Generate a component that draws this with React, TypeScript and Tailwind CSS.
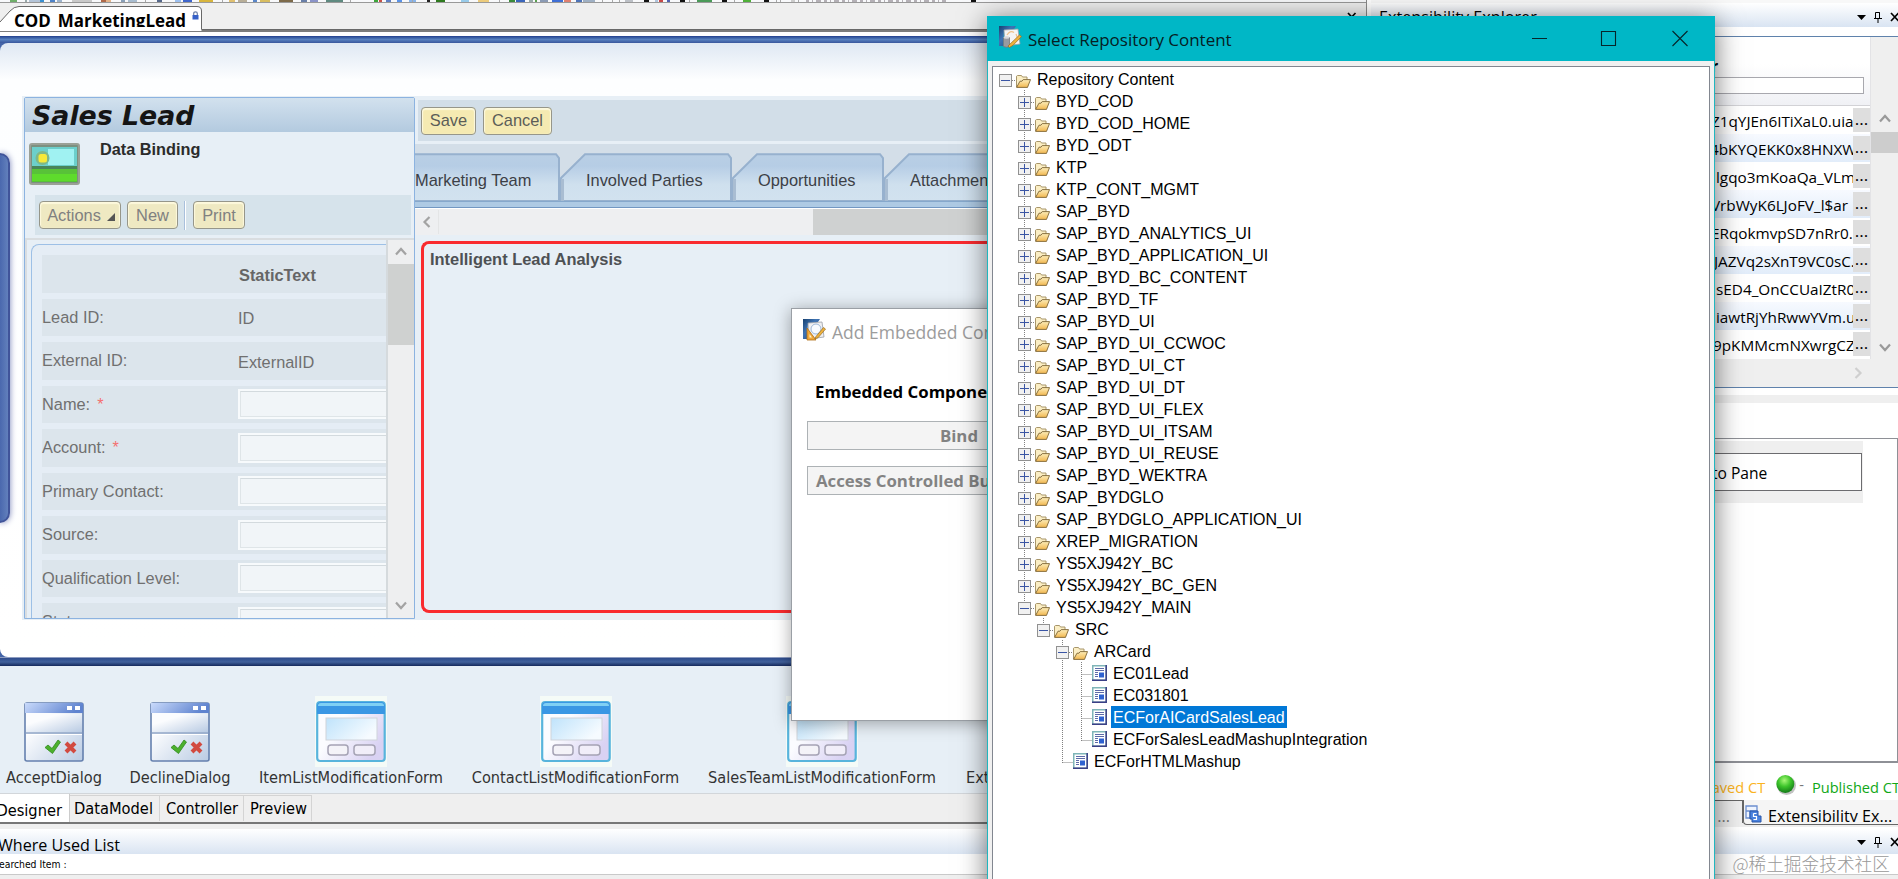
import type { ReactNode } from "react";

type NodeKind = "open" | "closed" | "leaf";
type TreeNode = { label: string; level: number; kind: NodeKind; guides?: number[]; last?: boolean; selected?: boolean };

const closedNames = [
  "BYD_COD", "BYD_COD_HOME", "BYD_ODT", "KTP", "KTP_CONT_MGMT", "SAP_BYD", "SAP_BYD_ANALYTICS_UI",
  "SAP_BYD_APPLICATION_UI", "SAP_BYD_BC_CONTENT", "SAP_BYD_TF", "SAP_BYD_UI", "SAP_BYD_UI_CCWOC",
  "SAP_BYD_UI_CT", "SAP_BYD_UI_DT", "SAP_BYD_UI_FLEX", "SAP_BYD_UI_ITSAM", "SAP_BYD_UI_REUSE",
  "SAP_BYD_WEKTRA", "SAP_BYDGLO", "SAP_BYDGLO_APPLICATION_UI", "XREP_MIGRATION", "YS5XJ942Y_BC", "YS5XJ942Y_BC_GEN",
];

const tree: TreeNode[] = [
  { label: "Repository Content", level: 0, kind: "open", last: true },
  ...closedNames.map((label): TreeNode => ({ label, level: 1, kind: "closed" })),
  { label: "YS5XJ942Y_MAIN", level: 1, kind: "open", last: true },
  { label: "SRC", level: 2, kind: "open", last: true },
  { label: "ARCard", level: 3, kind: "open" },
  { label: "EC01Lead", level: 4, kind: "leaf", guides: [3] },
  { label: "EC031801", level: 4, kind: "leaf", guides: [3] },
  { label: "ECForAICardSalesLead", level: 4, kind: "leaf", guides: [3], selected: true },
  { label: "ECForSalesLeadMashupIntegration", level: 4, kind: "leaf", guides: [3], last: true },
  { label: "ECForHTMLMashup", level: 3, kind: "leaf", last: true },
];

function FolderIcon() {
  return (
    <svg width="15" height="13" viewBox="0 0 15 13" className="mt-px block shrink-0">
      <defs>
        <linearGradient id="folderFront" x1="0" y1="0" x2="0" y2="1">
          <stop offset="0" stopColor="#fdedb8" />
          <stop offset="1" stopColor="#f2b850" />
        </linearGradient>
      </defs>
      <path d="M0.500 12V1.200L1.500 .500h4l1 1.500h4.500v3" fill="#fbeec4" stroke="#a8966a" />
      <path d="M.6 12.400 4 6.200h2l1.200-1.600h7.300L11.500 12.400z" fill="url(#folderFront)" stroke="#7d6434" strokeWidth=".9" />
    </svg>
  );
}

function LeafIcon() {
  return (
    <svg width="15" height="16" viewBox="0 0 15 16" className="block shrink-0">
      <rect x=".75" y=".75" width="13.500" height="14.500" fill="#fff" stroke="#7fb5b8" strokeWidth="1.500" />
      <path d="M14.200 0v15.300H0" fill="none" stroke="#3a3f86" strokeWidth="1.500" />
      <path d="M3 3.500h9M3 5.500h9M3 7.500h3M3 9.500h3M3 11.500h3" stroke="#5d6aa8" strokeWidth="1" />
      <rect x="7" y="7.500" width="5" height="5" fill="#2f62d0" />
    </svg>
  );
}

function Gutter({ node }: { node: TreeNode }) {
  const w = node.level * 19 + 17;
  const x = node.level * 19;
  const cx = x + 6.5;
  const dots = { stroke: "#808080", strokeDasharray: "1 1", strokeWidth: 1 };
  return (
    <svg width={w} height="22" className="block shrink-0">
      {node.guides?.map((g) => <path key={g} d={`M${g * 19 + 6.5} 0v22`} {...dots} />)}
      {node.level > 0 && <path d={`M${cx} 0V${node.last ? 13 : 22}`} {...dots} />}
      <path d={`M${node.kind === "leaf" ? cx : x + 13} 12.500H${w}`} {...dots} />
      {node.kind !== "leaf" && (
        <g>
          <rect x={x + 0.5} y="6.500" width="12" height="12" fill="#f1f1f1" stroke="#919191" />
          <path d={`M${x + 2} 12.500h9`} stroke="#3a55a4" />
          {node.kind === "closed" && <path d={`M${cx} 8v9`} stroke="#3a55a4" />}
        </g>
      )}
    </svg>
  );
}

function TreeRow({ node }: { node: TreeNode }) {
  return (
    <div className="flex h-[22px] items-center">
      <Gutter node={node} />
      {node.kind === "leaf" ? <LeafIcon /> : <div className="mt-[3px]"><FolderIcon /></div>}
      <span className={`ml-1 h-[22px] px-[2px] text-[16px] leading-[23px] whitespace-nowrap ${node.selected ? "bg-[#0078d7] text-white" : "text-black"}`}>
        {node.label}
      </span>
    </div>
  );
}

function AppIcon() {
  return (
    <svg width="24" height="24" viewBox="0 0 24 24" className="block shrink-0">
      <defs>
        <linearGradient id="navy" x1="0" y1="0" x2="1" y2="1">
          <stop offset="0" stopColor="#17406f" />
          <stop offset=".4" stopColor="#3f74b4" />
          <stop offset="1" stopColor="#1b457a" />
        </linearGradient>
      </defs>
      <path d="M1 1h17l-2 3-10 2-1 15H1z" fill="url(#navy)" />
      <path d="M6 5 20 4l2 15-15 2z" fill="#f0f0f2" stroke="#9aa0a8" strokeWidth=".8" />
      <circle cx="14" cy="11" r="5" fill="#f8fbff" stroke="#9db8d8" />
      <path d="M5 10v12h9z" fill="#f0a83a" stroke="#b06f16" strokeWidth=".8" />
      <path d="M7.500 16v3.500H10z" fill="#fff2cc" />
      <path d="M14 18.500 21.500 9.500l2 1.600-7.500 8.700-3 1z" fill="#eeb23c" stroke="#9a6a1c" strokeWidth=".7" />
    </svg>
  );
}

function RepoIcon() {
  return (
    <svg width="24" height="24" viewBox="0 0 24 24" className="block shrink-0">
      <path d="M1 1h17l-2 3-10 2-1 15H1z" fill="url(#navy)" />
      <path d="M6 5 20 4l2 15-15 2z" fill="#f4f4f4" stroke="#9aa0a8" strokeWidth=".8" />
      <path d="M9 10q3-5 7-2.500M18 9l1.500 4" fill="none" stroke="#f0c088" strokeWidth="1.200" />
      <path d="M5.500 12.500h6v9q-3 1.500-6 0z" fill="#9a9aa0" stroke="#77777c" strokeWidth=".8" />
      <ellipse cx="8.500" cy="12.500" rx="3" ry="1.200" fill="#d8d8dc" />
      <path d="M10 21 21.500 10l2 1.600-8.500 8.700-3.500 2.200z" fill="#eeb23c" stroke="#9a6a1c" strokeWidth=".7" />
    </svg>
  );
}

const specks: [number, number, string][] = [
  [10, 7, "#6fae6a"], [25, 2, "#9aa"], [29, 11, "#b4c4d8"], [40, 4, "#3a8fd0"], [50, 5, "#4f83c8"], [57, 5, "#9db3cc"], [72, 20, "#c9c9c9"],
  [101, 5, "#b06a4a"], [106, 5, "#e4b48a"], [121, 4, "#8aa0b8"], [128, 9, "#a8bccf"], [157, 5, "#56688a"], [175, 6, "#9cc0f0"], [183, 9, "#3f66cc"],
  [199, 14, "#d8b53c"], [229, 6, "#e0c070"], [238, 9, "#b8ae98"], [253, 4, "#5a86c8"], [260, 10, "#d8bd60"], [279, 14, "#7d6a4a"], [301, 6, "#6a7fa8"],
  [310, 8, "#8a93c8"], [326, 17, "#5f8a80"], [374, 4, "#3da63a"], [379, 3, "#c85048"], [386, 5, "#5f7fc4"], [397, 5, "#5a92e8"], [409, 7, "#88b4ea"],
  [427, 3, "#222"], [436, 9, "#2e7a1e"], [461, 8, "#98cbea"], [478, 11, "#eccb7c"], [509, 6, "#3a8a3a"], [516, 9, "#3b66bc"], [529, 4, "#9aa"],
  [535, 2, "#5aa050"], [540, 8, "#8a9ab4"], [552, 11, "#3f6fd6"], [564, 7, "#e07f70"], [576, 6, "#4d73b8"], [583, 12, "#9fb0c4"], [625, 8, "#bcc0c6"],
  [644, 5, "#111"], [655, 3, "#b0c4dc"], [659, 4, "#c84848"], [667, 3, "#5060b0"], [680, 5, "#111"], [697, 15, "#4a9a58"], [722, 5, "#111"],
  [743, 8, "#4fb038"], [764, 5, "#111"], [791, 4, "#ccc"], [971, 5, "#111"],
];
const separators = [145, 222, 350, 412, 499, 602, 612, 619, 689, 734, 776, 780, 798];

function ToolbarStrip() {
  return (
    <svg width="1366" height="2" className="block shrink-0 bg-[#f8f9fb]">
      {specks.map(([x, w, c]) => <rect key={x} x={x} y="0" width={w} height="2" fill={c} />)}
      {separators.map((x) => <rect key={x} x={x} y="0" width="1" height="2" fill="#a8a8a8" />)}
      <path d="M806 1h140" stroke="#b4b0b6" strokeWidth="2" strokeDasharray="3 3 1 3 5 3" />
    </svg>
  );
}

function CloseGlyph() {
  return (
    <svg width="10" height="10" viewBox="0 0 10 10" className="block shrink-0">
      <path d="M1 1l7.500 8M8.500 1 1 9" stroke="#000" strokeWidth="1.700" />
    </svg>
  );
}

function PaneControls() {
  return (
    <div className="flex items-center">
      <svg width="9" height="5" className="block"><path d="M0 0h9L4.500 5z" fill="#000" /></svg>
      <svg width="8" height="11" viewBox="0 0 8 11" className="ml-2 block">
        <path d="M1.500 6.500V.5h4v6M0 6.500h8M4 7v4M5.500 .5v6" fill="none" stroke="#000" />
      </svg>
      <div className="ml-2 w-[8px] overflow-hidden"><CloseGlyph /></div>
    </div>
  );
}

function Chevron({ dir, color = "#a3a3a3" }: { dir: "up" | "down" | "left" | "right"; color?: string }) {
  const d = { up: "M2 9.500 7 4l5 5.500", down: "M2 4.500 7 10l5-5.500", left: "M9.500 2 4.500 7l5 5", right: "M4.500 2l5 5-5 5" }[dir];
  return <svg width="14" height="14" className="block"><path d={d} fill="none" stroke={color} strokeWidth="2.200" /></svg>;
}

function YellowButton({ children, className }: { children: ReactNode; className: string }) {
  return (
    <div className={`flex h-7 items-center justify-center rounded-[4px] border-[1.500px] border-[#96968a] text-[16.400px] leading-none shadow-[inset_0_1px_1px_1px_#fdf9dd] ${className}`}>
      {children}
    </div>
  );
}

const fields = [
  { label: "", value: "StaticText", bold: true },
  { label: "Lead ID:", value: "ID" },
  { label: "External ID:", value: "ExternalID" },
  { label: "Name:", required: true },
  { label: "Account:", required: true },
  { label: "Primary Contact:" },
  { label: "Source:" },
  { label: "Qualification Level:" },
  { label: "Status:" },
];

function SalesLeadPanel() {
  return (
    <div className="mt-[1px] ml-[2px] flex h-[522px] w-[391px] shrink-0 flex-col rounded-t-[2px] border border-[#8cb3e0] bg-[#e7eff6]">
      <div className="flex h-[34px] shrink-0 items-center bg-linear-to-b from-[#d2e1ee] to-[#b3cadf] pt-[3px] pl-[7px] font-['DejaVu_Sans'] text-[26.800px] leading-none font-bold text-[#151515] italic">
        Sales Lead
      </div>
      <div className="flex h-[63px] shrink-0">
        <svg width="54" height="44" viewBox="0 0 54 44" className="mt-[10px] ml-[3px] block blur-[0.7px]">
          <rect x="1" y="1" width="51" height="42" rx="3" fill="#9aa096" />
          <rect x="3" y="3" width="47" height="38" rx="1" fill="#7c9080" />
          <rect x="4" y="5" width="45" height="20" fill="#6ccfcb" />
          <path d="M20 7h26v16H20z" fill="#a0f2f2" />
          <path d="M4 24h45v3H4z" fill="#48855a" />
          <rect x="4" y="27" width="45" height="13" fill="#58c238" />
          <rect x="4" y="32" width="45" height="7" fill="#5edb2c" />
          <circle cx="14.500" cy="16" r="7" fill="#7fb888" />
          <rect x="10.500" y="12" width="8.500" height="8.500" rx="2.500" fill="#f6e93a" />
        </svg>
        <span className="mt-[8px] ml-[18px] text-[16.300px] leading-[19px] font-bold text-[#2b2b2b]">Data Binding</span>
      </div>
      <div className="mx-[3px] ml-[10px] flex h-10 shrink-0 items-center bg-[#d6e3eb] pl-[4px] text-[#808080]">
        <YellowButton className="w-[82px] gap-[6px] bg-[#efe9c2] pl-[2px]">
          Actions
          <svg width="8" height="8" className="mt-1 block"><path d="M8 0v8H0z" fill="#555" /></svg>
        </YellowButton>
        <YellowButton className="ml-[6px] w-[51px] bg-[#efe9c2]">New</YellowButton>
        <div className="ml-[6px] h-[29px] w-[2px] border-r border-white bg-[#a9c0dc]" />
        <YellowButton className="ml-[7px] w-[52px] bg-[#efe9c2]">Print</YellowButton>
      </div>
      <div className="mt-[3px] flex min-h-0 flex-1 border-t-2 border-l-2 border-[#d9dde0]">
        <div className="mt-[4px] ml-[4px] h-[374px] w-[355px] shrink-0 overflow-hidden rounded-tl-[8px] border-t border-l-[1.500px] border-[#9dc0e6] bg-[#e5edf5] pt-[10px] pl-[10px]">
          <div className="flex flex-col gap-[6px]">
            {fields.map((f) => (
              <div key={f.label} className="flex h-[37.500px] items-center bg-[#dce5ec] text-[16.350px] leading-[20px] text-[#707070]">
                <div className="w-[196px] shrink-0 pb-[1.500px]">
                  {f.label}
                  {f.required && <span className="ml-[7px] text-[#f47070]">*</span>}
                </div>
                {f.value ? (
                  <div className={f.bold ? "pt-[2px] pl-px font-bold text-[#666]" : "pt-[2px]"}>{f.value}</div>
                ) : (
                  <div className="h-[30px] flex-1 bg-[#f7fafc] py-[2px] pl-[2px]">
                    <div className="h-[26px] border border-r-0 border-[#dfe5e8] border-t-[#d3dade] bg-[#f1f5f8]" />
                  </div>
                )}
              </div>
            ))}
          </div>
        </div>
        <div className="w-[2px] bg-[#d5dadd]" />
        <div className="flex flex-1 flex-col items-center bg-[#eeeff0]">
          <div className="flex h-[24px] items-center"><Chevron dir="up" /></div>
          <div className="h-[81px] w-full bg-[#cfd1d0]" />
          <div className="flex-1" />
          <div className="flex h-[26px] items-center"><Chevron dir="down" /></div>
        </div>
      </div>
    </div>
  );
}

function Tab({ label, width, first }: { label: string; width: number; first?: boolean }) {
  const outline = first ? `M-2 1.200H${width - 4}l3 4V48H-2z` : `M1 25 25 1.200H${width - 4}l3 4V48H1z`;
  return (
    <div className="relative flex h-12 shrink-0 items-center" style={{ width }}>
      <svg width={width} height="48" className="absolute inset-0 block">
        <defs>
          <linearGradient id="tabFill" x1="0" y1="0" x2="0" y2="1">
            <stop offset="0" stopColor="#b9cfe5" />
            <stop offset=".25" stopColor="#b6cde5" />
            <stop offset=".65" stopColor="#cfe0ee" />
            <stop offset="1" stopColor="#d2e2ef" />
          </linearGradient>
        </defs>
        <path d={outline} fill="url(#tabFill)" stroke="#97b1ce" strokeWidth="2" />
        {!first && <path d="M2.500 26v22" stroke="#a9bdd2" strokeWidth="3" />}
      </svg>
      <span className={`relative pt-[6px] text-[16.400px] whitespace-nowrap text-[#3c4046] ${first ? "" : "pl-[26px]"}`}>{label}</span>
    </div>
  );
}

function DialogThumb() {
  return (
    <svg width="60" height="60" viewBox="0 0 60 60" className="block">
      <defs>
        <linearGradient id="dlgHead" x1="0" y1="0" x2="1" y2="0.200">
          <stop offset="0" stopColor="#c9dafb" />
          <stop offset="1" stopColor="#5f83cf" />
        </linearGradient>
        <linearGradient id="dlgBody" x1="0" y1="0" x2="1" y2="1">
          <stop offset="0.300" stopColor="#fbfcfe" />
          <stop offset="1" stopColor="#b9cbe3" />
        </linearGradient>
      </defs>
      <rect x="1" y="1" width="58" height="58" rx="2" fill="url(#dlgBody)" stroke="#6580ae" strokeWidth="1.600" />
      <rect x="2" y="12" width="56" height="18" fill="url(#dlgBody)" />
      <rect x="1" y="1" width="58" height="10" fill="url(#dlgHead)" />
      <rect x="43" y="4" width="5" height="4" fill="#fff" />
      <rect x="51" y="4" width="5" height="4" fill="#fff" />
      <path d="M2 31h56" stroke="#8ba2c4" strokeWidth="1.500" />
      <path d="M2 32.500h56" stroke="#fff" strokeWidth="1.200" />
      <path d="M21 45.500l3-2.500 4 3.500 6-8.500 2.500 2-8 11.500z" fill="#4cb02c" stroke="#2f8a1e" strokeWidth=".8" />
      <path d="M42 41l9 9M51 41l-9 9" stroke="#d24a40" strokeWidth="4" />
    </svg>
  );
}

function FormThumb() {
  return (
    <svg width="72" height="71" viewBox="0 0 72 71" className="block">
      <defs>
        <linearGradient id="frmBody" x1="0" y1="0" x2="1" y2="0.600">
          <stop offset="0.400" stopColor="#fbfcff" />
          <stop offset="1" stopColor="#d9d2f3" />
        </linearGradient>
        <linearGradient id="frmView" x1="0" y1="0" x2="1" y2="0.500">
          <stop offset="0" stopColor="#bfe3fb" />
          <stop offset="1" stopColor="#f6fbff" />
        </linearGradient>
      </defs>
      <rect width="72" height="71" fill="#f5fbf7" />
      <rect x="2.200" y="6" width="67.500" height="59" rx="3" fill="url(#frmBody)" stroke="#58b4dc" strokeWidth="2.200" />
      <path d="M2 10q0-4 4-4h60q4 0 4 4v8H2z" fill="#3a97e4" />
      <path d="M3 10q0-3 3-3h60q3 0 3 3z" fill="#7fd0f4" />
      <rect x="11" y="22" width="51" height="22" fill="url(#frmView)" stroke="#cfd3da" strokeWidth="1" />
      <rect x="13" y="49" width="20" height="10" rx="3" fill="#f4f3f8" stroke="#a5a3b4" strokeWidth="1.500" />
      <rect x="39" y="49" width="21" height="10" rx="3" fill="#f1eef9" stroke="#a5a3b4" strokeWidth="1.500" />
    </svg>
  );
}

const thumbs = [
  { label: "AcceptDialog", form: false, w: "w-[94px]" },
  { label: "DeclineDialog", form: false, w: "w-[98px]" },
  { label: "ItemListModificationForm", form: true, w: "w-[184px]" },
  { label: "ContactListModificationForm", form: true, w: "w-[205px]" },
  { label: "SalesTeamListModificationForm", form: true, w: "w-[228px]" },
];

function DesignerPane() {
  return (
    <div className="flex h-[879px] w-[1367px] shrink-0 flex-col overflow-hidden border-r border-[#8a8a8a] bg-[#efefef]">
      <ToolbarStrip />
      <div className="relative flex h-[28px] shrink-0 justify-between border-t border-[#999] bg-[#efefef]">
        <svg width="1366" height="28" className="absolute inset-0 block">
          <path d="M0 28V19L10 8q4-4.500 9-4.500h178q4.500 0 4.500 4.500v20z" fill="#fff" />
          <path d="M0 19 10 8q4-4.500 9-4.500h178q4.500 0 4.500 4.500v18.500h1164" fill="none" stroke="#686868" />
        </svg>
        <div className="relative flex h-[24px] items-start overflow-hidden pl-[14px]">
          <span className="pt-[8px] font-['Open_Sans'] text-[16.950px] leading-[20px] font-bold text-black">COD_MarketingLead</span>
          <svg width="7" height="9" viewBox="0 0 7 9" className="mt-[8px] ml-[6px] block">
            <path d="M1.700 4V2.500q0-1.700 1.800-1.700t1.800 1.700V4" fill="none" stroke="#6a7ea8" strokeWidth="1.200" />
            <rect x=".5" y="4" width="6" height="4.500" fill="#3560c8" />
          </svg>
        </div>
        <div className="relative mt-[9px] mr-[9px]"><CloseGlyph /></div>
      </div>
      <div className="h-[6px] shrink-0 border-t-2 border-[#7d7d7d] bg-white" />

      <div className="flex h-[630px] shrink-0 flex-col bg-[#4464a8]">
        <div className="h-[7px] shrink-0 bg-linear-to-b from-[#23408e] via-[#5881bf] to-[#38569c]" />
        <div className="flex min-h-0 flex-1 rounded-l-[8px] bg-linear-to-b from-[#dfe8f3] via-[#fdfeff] via-[6%] to-white">
          <div className="mt-[110px] h-[370px] w-[10px] shrink-0 rounded-r-[10px] border-y-2 border-r-2 border-[#40549a] bg-linear-to-r from-[#4a68ae] to-[#6280bc] shadow-[0_0_6px_#7a84b8]" />
          <div className="mt-[53px] ml-[12px] flex h-[524px] flex-1 bg-[#e7eff6]">
            <SalesLeadPanel />
            <div className="flex min-w-0 flex-1 flex-col">
              <div className="mt-[4px] ml-[3px] flex h-[41px] shrink-0 items-center gap-[7px] bg-[#d2dee8] pl-[3px] text-[#5b5d58]">
                <YellowButton className="w-[55px] bg-[#f5eab2]">Save</YellowButton>
                <YellowButton className="w-[69px] bg-[#f5eab2]">Cancel</YellowButton>
              </div>
              <div className="mt-[3px] flex h-[57px] shrink-0 items-end overflow-hidden bg-[#d3dee8]">
                <Tab label="Marketing Team" width={145} first />
                <Tab label="Involved Parties" width={172} />
                <Tab label="Opportunities" width={152} />
                <Tab label="Attachments" width={172} />
              </div>
              <div className="h-[7px] shrink-0 border-t border-b border-t-[#86a8cc] border-b-[#7297c2] bg-[#aecae4]" />
              <div className="flex h-[27px] shrink-0 items-center border-t border-white bg-[#eeeff1]">
                <div className="flex h-[24px] w-[24px] items-center justify-center border-r border-[#e4e5e6]"><Chevron dir="left" /></div>
                <div className="ml-[374px] h-[26px] flex-1 bg-[#cfd1d1]" />
              </div>
              <div className="mt-[6px] ml-[6px] h-[372px] shrink-0 rounded-l-[8px] border-[3px] border-r-0 border-[#f92b2f] pt-[3px] pl-[6px] text-[16.450px] leading-[24px] font-bold text-[#4e5154]">
                Intelligent Lead Analysis
              </div>
            </div>
          </div>
        </div>
        <div className="h-[9px] shrink-0 border-t border-[#8d9cc0] bg-linear-to-b from-[#2e4b8c] via-[#41619b] to-[#16295c]" />
      </div>

      <div className="flex h-[127px] shrink-0 items-start gap-[30px] bg-[#e7eff6] pt-[30px] pl-[7px] font-['DejaVu_Sans_Condensed','DejaVu_Sans',sans-serif] text-[16.200px] text-[#333]">
        {thumbs.map((t) => (
          <div key={t.label} className={`flex shrink-0 flex-col items-center ${t.w}`}>
            <div className="flex h-[71px] items-center">{t.form ? <FormThumb /> : <DialogThumb />}</div>
            <span className="leading-[21px] whitespace-nowrap">{t.label}</span>
          </div>
        ))}
        <span className="pt-[71px] leading-[21px] whitespace-nowrap">Ext</span>
      </div>

      <div className="flex h-[31px] shrink-0 items-start border-t border-b-2 border-t-[#d2d6da] border-b-[#777] bg-[#efefef] font-['DejaVu_Sans_Condensed','DejaVu_Sans',sans-serif] text-[16.300px] leading-[26px] text-black">
        <div className="flex h-[28px] w-[70px] items-center justify-end border-r border-[#ccc] bg-white pt-[5px] pr-[7px]">Designer</div>
        <div className="mt-px h-[26px] w-[90px] border-t border-r border-[#d4d4d4] pl-[4px]">DataModel</div>
        <div className="mt-px h-[26px] w-[84px] border-t border-r border-[#d4d4d4] pl-[6px]">Controller</div>
        <div className="mt-px h-[26px] w-[68px] border-t border-r border-[#d4d4d4] pl-[6px]">Preview</div>
      </div>
      <div className="mt-[5px] flex h-[25px] shrink-0 items-center bg-linear-to-b from-white to-[#d9e4f2] pt-[7px] font-['Open_Sans'] text-[16.100px] text-black">
        <span className="-ml-[2px]">Where Used List</span>
      </div>
      <div className="h-[21px] shrink-0 border-b border-[#c9c9c9] bg-white font-['DejaVu_Sans_Condensed','DejaVu_Sans',sans-serif] text-[10.300px] leading-[21px] text-black">
        <span className="-ml-px">earched Item :</span>
      </div>
    </div>
  );
}

const assets = [
  "Z1qYJEn6ITiXaL0.uiac", "4bKYQEKK0x8HNXW", "lgqo3mKoaQa_VLm.", "VrbWyK6LJoFV_l$ar", "ERqokmvpSD7nRr0.",
  "JAZVq2sXnT9VC0sC.", "sED4_OnCCUaIZtR0", "iawtRjYhRwwYVm.u", "9pKMMcmNXwrgCZ.",
];
const assetIndent = ["pl-[340px]", "pl-[339px]", "pl-[345px]", "pl-[340px]", "pl-[340px]", "pl-[343px]", "pl-[345px]", "pl-[345px]", "pl-[342px]"];

function ExplorerPane() {
  return (
    <div className="flex h-[879px] min-w-0 flex-1 flex-col overflow-hidden bg-white pl-[4px] font-['Open_Sans']">
      <div className="h-[3px] shrink-0 bg-[#f8f8f8]" />
      <div className="flex h-[24px] shrink-0 items-center justify-between bg-linear-to-b from-white to-[#d9e4f2] pl-[8px] text-[16.200px] text-black">
        <span className="pt-[4px] leading-[24px]">Extensibility Explorer</span>
        <div className="pt-1"><PaneControls /></div>
      </div>
      <div className="mt-[9px] flex h-[352px] shrink-0 flex-col border-t border-b border-[#5f82ac] bg-[#efefef]">
        <div className="flex min-h-0 flex-1">
          <div className="flex w-[500px] shrink-0 flex-col border-r border-[#e3e3e6] bg-white">
            <div className="flex h-[69px] shrink-0 flex-col border-b border-[#d2d2d6] bg-linear-to-b from-white from-40% to-[#f0f1f5] pl-[338px] text-[16px] font-bold">
              <span className="h-[37px] pt-[16px] pl-[2px] leading-[26px]">r</span>
              <div className="mt-[3px] mr-[6px] h-[17px] shrink-0 border border-[#a8a8ae] bg-white" />
            </div>
            {assets.map((a, i) => (
              <div key={a} className={`flex h-7 shrink-0 items-center text-[15.300px] text-black ${i % 2 ? "bg-linear-to-b from-[#f7faff] to-[#e2edfa]" : "bg-white"}`}>
                <div className={`w-[482px] shrink-0 overflow-hidden pt-[2px] whitespace-nowrap ${assetIndent[i]}`}>{a}</div>
                <div className="h-6 w-[17px] shrink-0 bg-[#dedede] text-center text-[17px] leading-[22px]">...</div>
              </div>
            ))}
          </div>
          <div className="flex flex-1 flex-col items-center bg-[#efefef] pt-[75px]">
            <div className="flex h-[20px] items-start"><Chevron dir="up" color="#999" /></div>
            <div className="h-[21px] w-full bg-[#cdcdcd]" />
            <div className="flex-1" />
            <Chevron dir="down" color="#999" />
            <div className="h-[5px]" />
          </div>
        </div>
        <div className="flex h-[28px] shrink-0 items-center justify-end pr-[33px]"><Chevron dir="right" color="#cfcfcf" /></div>
      </div>
      <div className="mt-[7px] h-[8px] shrink-0 bg-[#efefef]" />
      <div className="mt-[35px] h-[325px] shrink-0 border-t border-r border-b-2 border-[#8e9096] bg-white pt-[2px]">
        <div className="h-[62px] w-[492px] bg-[#efefef] pt-[12px] pr-px">
          <div className="flex h-[38px] items-center border border-[#6c6c6f] bg-white pt-[3px] pl-[340px] text-[15.600px] text-black">to Pane</div>
        </div>
      </div>
      <div className="flex h-[37px] shrink-0 items-center justify-end text-[14.600px] leading-none whitespace-nowrap">
        <span className="pt-[12px] text-[#fbb321]">Saved CT</span>
        <svg width="22" height="22" viewBox="0 0 22 22" className="mt-[7px] ml-[10px] block">
          <defs>
            <radialGradient id="ball" cx=".45" cy=".3" r=".7">
              <stop offset="0" stopColor="#a8f878" />
              <stop offset=".5" stopColor="#3cc42a" />
              <stop offset="1" stopColor="#147a18" />
            </radialGradient>
          </defs>
          <circle cx="11.500" cy="11.500" r="9.500" fill="#9a9a9a" opacity=".6" />
          <circle cx="10.300" cy="10" r="9" fill="url(#ball)" />
        </svg>
        <span className="ml-[2px] pt-[6px] text-[#777]">-</span>
        <span className="-mr-[2px] ml-[8px] pt-[12px] text-[#10a818]">Published CT</span>
      </div>
      <div className="flex h-[27px] shrink-0 overflow-hidden bg-[#efefef] text-[16.150px] text-black">
        <div className="h-[23px] w-[372px] shrink-0 border-t border-r border-[#666] pt-[3px] pr-[12px] text-right text-[#777]">...</div>
        <div className="flex h-[25px] flex-1 items-start overflow-hidden rounded-bl-[4px] border-b border-l border-[#666] bg-[#f5f5f5] pl-px">
          <svg width="17" height="18" viewBox="0 0 17 18" className="mt-[5px] block shrink-0">
            <path d="M1 1h11v5H1zM1 1v12h4V6" fill="#eef4ff" stroke="#6c8fd0" strokeWidth="1.300" />
            <path d="M5 6h8v5h3v6H7v-3H5z" fill="#4a82de" stroke="#2b56a8" />
            <path d="M8.500 8.500h3M8.500 8.500v3h3v3h-3" fill="none" stroke="#fff" strokeWidth="1.200" />
          </svg>
          <div className="ml-[6px] h-[22px] overflow-hidden leading-[32px] whitespace-nowrap">Extensibility Ex...</div>
        </div>
      </div>
      <div className="mt-[2px] flex h-[25px] shrink-0 items-center justify-end bg-linear-to-b from-white to-[#d9e4f2] pt-px"><PaneControls /></div>
      <div className="h-[21px] shrink-0 border-b border-[#c9c9c9] bg-white" />
      <div className="flex-1 bg-[#efefef]" />
    </div>
  );
}

export default function App() {
  return (
    <div className="relative flex h-[879px] w-[1898px] overflow-hidden bg-[#efefef] font-['Liberation_Sans',sans-serif]">
      <DesignerPane />
      <ExplorerPane />

      <div className="absolute top-[308px] left-[791px] h-[413px] w-[400px] border border-[#9a9fa5] bg-white font-['Open_Sans'] shadow-[0_2px_16px_rgba(0,0,0,0.35)]">
        <div className="flex h-[46px] items-center pl-[10px] text-[17.500px] whitespace-nowrap">
          <div className="-mt-[4px]"><AppIcon /></div>
          <span className="ml-[6px] text-[#9c9c9c]">Add Embedded Component</span>
        </div>
        <div className="mt-[25px] pl-[23px] text-[16.800px] leading-[24px] font-bold whitespace-nowrap text-black">Embedded Component</div>
        <div className="mt-[17px] ml-[15px] flex h-[29px] w-[304px] items-center justify-center border border-[#adb2b5] bg-[#f4f4f4] text-[16.800px] font-bold text-[#838383]">Bind</div>
        <div className="mt-[16px] ml-[15px] flex h-[29px] w-[370px] items-center border border-[#adb2b5] bg-[#f4f4f4] pl-[8px] text-[16.800px] font-bold whitespace-nowrap text-[#838383]">Access Controlled Business</div>
      </div>

      <div className="absolute top-[16px] left-[987px] flex h-[900px] w-[728px] flex-col border border-[#20b6bf] bg-[#f0f0f0] shadow-[0_4px_26px_rgba(0,0,0,0.55)]">
        <div className="-mx-px -mt-px flex h-[45px] shrink-0 items-center bg-[#00b7c6] pl-[11px]">
          <div className="-mt-[3px]"><RepoIcon /></div>
          <span className="ml-[6px] flex-1 pt-[2px] font-['Open_Sans'] text-[16.980px] text-[#062024]">Select Repository Content</span>
          <div className="flex items-center pr-[27px]">
            <svg width="156" height="17" viewBox="0 0 156 17" className="block">
              <path d="M0 8.500h15M69.500 1.500h14v14h-14zM140.500 1l15 15M155.500 1l-15 15" fill="none" stroke="#06262a" strokeWidth="1.100" />
            </svg>
          </div>
        </div>
        <div className="mx-[4px] mt-[5px] flex-1 border border-[#828790] bg-white pt-px pl-[6px]">
          {tree.map((n) => <TreeRow key={n.label} node={n} />)}
        </div>
      </div>

      <div className="absolute right-[8px] bottom-[5px] font-['Noto_Sans_CJK_SC',sans-serif] text-[17.700px] leading-[22px] font-light text-[#999]">@稀土掘金技术社区</div>
    </div>
  );
}
